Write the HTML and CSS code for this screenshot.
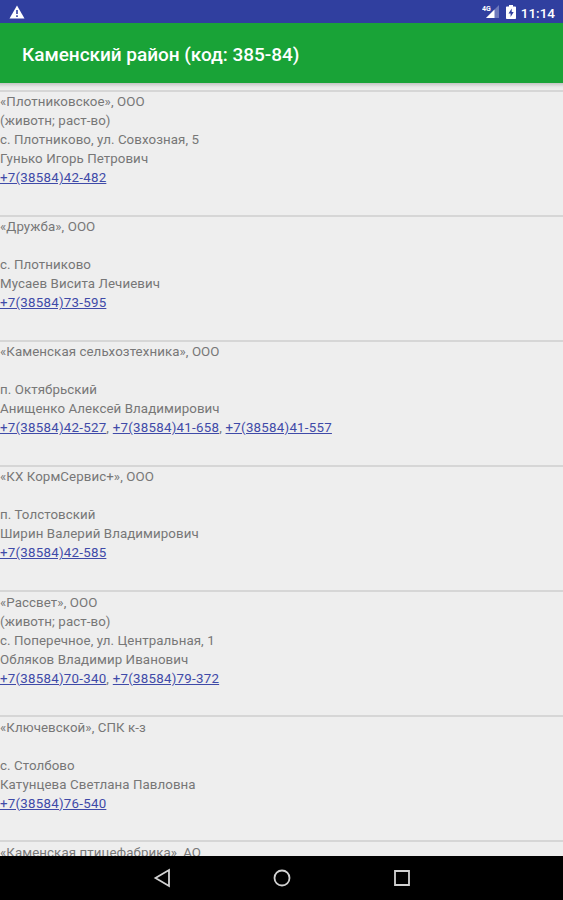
FILE: index.html
```html
<!DOCTYPE html>
<html lang="ru">
<head>
  <meta charset="utf-8">
  <title>Каменский район</title>
  <link rel="stylesheet" href="styles.css">
</head>
<body>
  <div class="status-bar">
    <svg class="warning" width="16" height="14" viewBox="0 0 16 14">
      <path d="M8 0.5L15.5 13.5H0.5Z" fill="#fff"/>
      <path d="M8 5v4M8 10.2v1.8" stroke="#303f9f" stroke-width="1.6"/>
    </svg>
    <div class="status-right">
      <svg class="signal" width="18" height="14" viewBox="0 0 18 14">
        <path d="M17 0V13H4Z" fill="#fff" fill-opacity=".3"/>
        <path d="M12.500 4.500V13H4Z" fill="#fff"/>
        <text x="0" y="5.500" class="network">4G</text>
      </svg>
      <svg class="battery" width="10" height="14" viewBox="0 0 10 14">
        <path d="M3 0h4v1.500h2.200q.8 0 .8.8v10.900q0 .8-.8.8H.8q-.8 0-.8-.8V2.300q0-.8.8-.8H3z" fill="#fff"/>
        <path d="M5.700 3.500L2.500 8.500H4.600V12L7.700 7H5.700z" fill="#303f9f"/>
      </svg>
      <span class="time">11:14</span>
    </div>
  </div>

  <div class="toolbar">
    <h1>Каменский район (код: 385-84)</h1>
  </div>

  <div class="list">
    <div class="item">
      <p>«Плотниковское», ООО</p>
      <p>(животн; раст-во)</p>
      <p>с. Плотниково, ул. Совхозная, 5</p>
      <p>Гунько Игорь Петрович</p>
      <p class="phones"><a href="tel:+73858442482">+7(38584)42-482</a></p>
    </div>
    <div class="item">
      <p>«Дружба», ООО</p>
      <p></p>
      <p>с. Плотниково</p>
      <p>Мусаев Висита Лечиевич</p>
      <p class="phones"><a href="tel:+73858473595">+7(38584)73-595</a></p>
    </div>
    <div class="item">
      <p>«Каменская сельхозтехника», ООО</p>
      <p></p>
      <p>п. Октябрьский</p>
      <p>Анищенко Алексей Владимирович</p>
      <p class="phones"><a href="tel:+73858442527">+7(38584)42-527</a>, <a href="tel:+73858441658">+7(38584)41-658</a>, <a href="tel:+73858441557">+7(38584)41-557</a></p>
    </div>
    <div class="item">
      <p>«КХ КормСервис+», ООО</p>
      <p></p>
      <p>п. Толстовский</p>
      <p>Ширин Валерий Владимирович</p>
      <p class="phones"><a href="tel:+73858442585">+7(38584)42-585</a></p>
    </div>
    <div class="item">
      <p>«Рассвет», ООО</p>
      <p>(животн; раст-во)</p>
      <p>с. Поперечное, ул. Центральная, 1</p>
      <p>Обляков Владимир Иванович</p>
      <p class="phones"><a href="tel:+73858470340">+7(38584)70-340</a>, <a href="tel:+73858479372">+7(38584)79-372</a></p>
    </div>
    <div class="item">
      <p>«Ключевской», СПК к-з</p>
      <p></p>
      <p>с. Столбово</p>
      <p>Катунцева Светлана Павловна</p>
      <p class="phones"><a href="tel:+73858476540">+7(38584)76-540</a></p>
    </div>
    <div class="item">
      <p>«Каменская птицефабрика», АО</p>
    </div>
  </div>

  <div class="nav-bar">
    <svg width="20" height="20" viewBox="0 0 20 20"><path d="M17 2V18L3.500 10Z"/></svg>
    <svg width="20" height="20" viewBox="0 0 20 20"><circle cx="10" cy="10" r="7.500"/></svg>
    <svg width="20" height="20" viewBox="0 0 20 20"><path d="M3 3H17V17H3Z"/></svg>
  </div>
</body>
</html>
```

FILE: styles.css
```css
* {
    box-sizing: border-box;
}

body {
    margin: 0;
    height: 900px;
    display: flex;
    flex-direction: column;
    overflow: hidden;
    font-family: Roboto, sans-serif;
    background: #eee;
}

.status-bar {
    flex: none;
    height: 23px;
    padding: 1px 8px 0 9px;
    display: flex;
    align-items: center;
    justify-content: space-between;
    background: #303f9f;
    color: #fff;
}

.status-right {
    display: flex;
    align-items: center;
}

.network {
    font-size: 7px;
    font-weight: bold;
    fill: #fff;
}

.battery {
    margin: 0 5px 0 6px;
}

.time {
    padding-top: 1px;
    font-size: 13.5px;
    font-weight: 500;
    line-height: 16px;
}

.toolbar {
    flex: none;
    height: 60px;
    padding-left: 22px;
    display: flex;
    align-items: center;
    background: #19a337;
}

.toolbar h1 {
    margin: 2px 0 0;
    font-size: 19px;
    font-weight: 500;
    letter-spacing: -0.03px;
    color: #fff;
}

/* scrolling list */
.list {
    flex: 1;
    min-height: 0;
    overflow: hidden;
    padding-top: 6.5px;
    background: linear-gradient(#c4c4c4, #e8e8e8 4px, #eee 7px);
}

.item {
    height: 125.15px;
    padding-top: 0.5px;
    border-top: 2px solid #d6d6d6;
}

.item p {
    margin: 0;
    height: 19px;
    font-size: 13.3px;
    line-height: 19px;
    letter-spacing: 0.08px;
    color: #777;
    white-space: nowrap;
}

.item .phones {
    letter-spacing: 0.25px;
}

.item a {
    color: #3f4aa8;
}

.nav-bar {
    flex: none;
    height: 44px;
    display: flex;
    align-items: center;
    justify-content: center;
    gap: 100px;
    background: #000;
}

.nav-bar svg {
    fill: none;
    stroke: #d2d2d2;
    stroke-width: 1.8;
}
```
